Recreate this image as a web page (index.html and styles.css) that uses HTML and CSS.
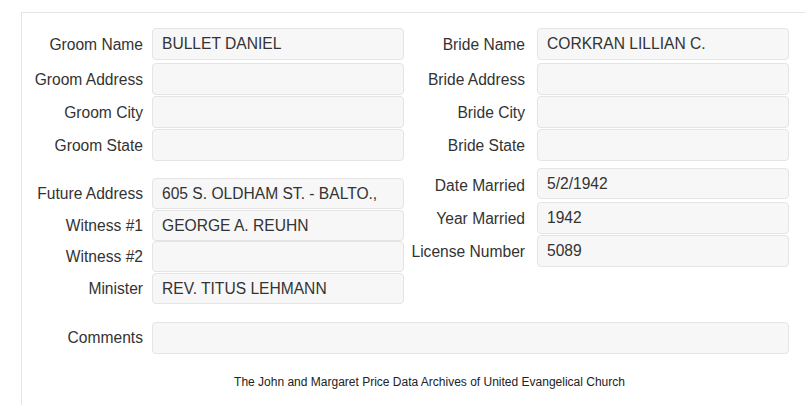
FILE: index.html
```html
<!DOCTYPE html>
<html>
<head>
<meta charset="utf-8">
<link rel="stylesheet" href="styles.css">
</head>
<body>
<div class="panel">
  <div class="cols">
    <div class="col">
      <div class="group g1">
        <div class="row first"><label>Groom Name</label><div class="box">BULLET DANIEL</div></div>
        <div class="row"><label>Groom Address</label><div class="box"></div></div>
        <div class="row"><label>Groom City</label><div class="box"></div></div>
        <div class="row"><label>Groom State</label><div class="box"></div></div>
      </div>
      <div class="group g2">
        <div class="row"><label>Future Address</label><div class="box">605 S. OLDHAM ST. - BALTO.,</div></div>
        <div class="row"><label>Witness #1</label><div class="box">GEORGE A. REUHN</div></div>
        <div class="row"><label>Witness #2</label><div class="box"></div></div>
        <div class="row"><label>Minister</label><div class="box">REV. TITUS LEHMANN</div></div>
      </div>
    </div>
    <div class="col right">
      <div class="group g1">
        <div class="row first"><label>Bride Name</label><div class="box">CORKRAN LILLIAN C.</div></div>
        <div class="row"><label>Bride Address</label><div class="box"></div></div>
        <div class="row"><label>Bride City</label><div class="box"></div></div>
        <div class="row"><label>Bride State</label><div class="box"></div></div>
      </div>
      <div class="group g3">
        <div class="row first"><label class="low">Date Married</label><div class="box">5/2/1942</div></div>
        <div class="row"><label>Year Married</label><div class="box">1942</div></div>
        <div class="row"><label>License Number</label><div class="box">5089</div></div>
      </div>
    </div>
  </div>
  <div class="row comments"><label>Comments</label><div class="box"></div></div>
  <p class="footer">The John and Margaret Price Data Archives of United Evangelical Church</p>
</div>
</body>
</html>
```
FILE: styles.css
```css
html, body {
  margin: 0;
  padding: 0;
  background: #fff;
}
body {
  font-family: "Liberation Sans", Arial, sans-serif;
  color: #333;
  font-size: 15.6px;
}
.panel {
  margin: 12px 0 0 21px;
  border-top: 1px solid #e5e5e5;
  border-left: 1px solid #e5e5e5;
  height: 393px;
  box-sizing: border-box;
  padding-top: 15px;
}
.cols {
  display: grid;
  grid-template-columns: 382px 385px;
}
.group {
  display: flex;
  flex-direction: column;
}
.g1 { gap: 1px; }
.g1 .row { height: 32px; }
.g1 .row.first { margin-bottom: 2px; }
.g2 { margin-top: 17px; gap: 0.67px; }
.g2 .row { height: 31px; }
.g3 { margin-top: 7px; gap: 1px; }
.g3 .row { height: 32px; }
.g3 .row.first { height: 31px; margin-bottom: 2px; }
.row {
  display: grid;
  grid-template-columns: 121px 252px;
  column-gap: 9px;
  align-items: center;
}
.right .row {
  column-gap: 12px;
}
label {
  text-align: right;
  white-space: nowrap;
  line-height: 20px;
  padding-top: 1px;
}
label.low {
  padding-top: 4px;
}
.box {
  height: 100%;
  box-sizing: border-box;
  background: #f7f7f7;
  border: 1px solid #e4e4e4;
  border-radius: 4px;
  padding: 5px 9px 0;
  line-height: 20px;
  white-space: nowrap;
  overflow: hidden;
}
.comments {
  margin-top: 18px;
  height: 32px;
  grid-template-columns: 121px 637px;
}
.footer {
  margin: 21px 0 0 0;
  width: 815px;
  text-align: center;
  font-size: 12px;
  color: #222;
}
```
